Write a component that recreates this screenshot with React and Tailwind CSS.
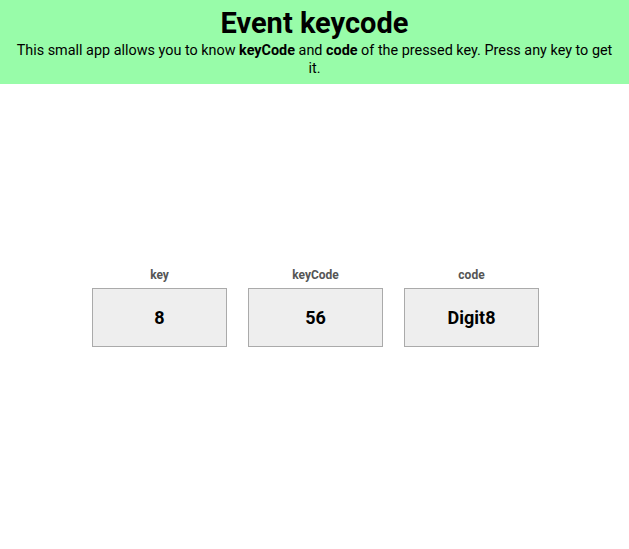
export default function App() {
  const items = [
    { label: "key", value: "8" },
    { label: "keyCode", value: "56" },
    { label: "code", value: "Digit8" },
  ];
  return (
    <div className="min-h-[549px] bg-white text-black" style={{ fontFamily: "Roboto, sans-serif" }}>
      <header className="bg-[#98fca9] h-[84px] pt-[6px] text-center">
        <h1 className="text-[29px] font-bold leading-[34px]">Event keycode</h1>
        <p className="text-[14.4px] leading-[18px] px-[12px] mt-[2px]">
          This small app allows you to know <b className="font-bold">keyCode</b> and <b className="font-bold">code</b> of the pressed key. Press any key to get it.
        </p>
      </header>
      <main className="flex justify-center gap-[21px] pt-[184px] pl-[2px]">
        {items.map((it) => (
          <div key={it.label} className="flex flex-col items-center">
            <div className="text-[12px] font-bold text-[#555] leading-[14px] mb-[6px]">{it.label}</div>
            <div className="w-[135px] h-[59px] border border-[#aaa] bg-[#eee] flex items-center justify-center text-[18px] font-bold">
              {it.value}
            </div>
          </div>
        ))}
      </main>
    </div>
  );
}
